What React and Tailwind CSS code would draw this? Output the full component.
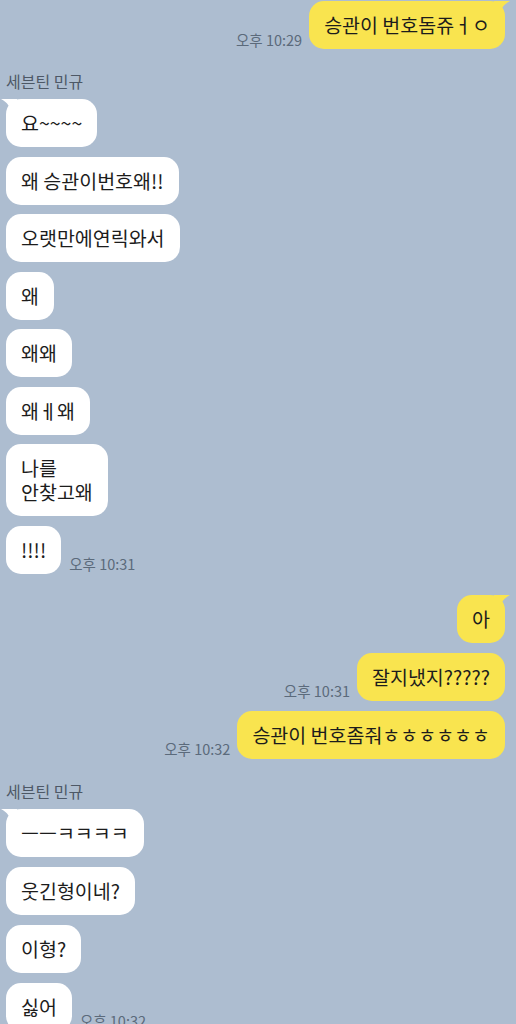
const font = { fontFamily: '"Noto Sans CJK KR", "Noto Sans", sans-serif' };

const LeftTail = () => (
  <svg
    className="absolute -left-[5px] top-0"
    width="16"
    height="16"
    viewBox="0 0 16 16"
  >
    <path d="M0 0 L16 0 L16 16 L11 16 C10 8 6 3 0 0 Z" fill="#ffffff" />
  </svg>
);

const RightTail = () => (
  <svg
    className="absolute -right-[5px] top-0"
    width="16"
    height="16"
    viewBox="0 0 16 16"
  >
    <path d="M16 0 L0 0 L0 16 L5 16 C6 8 10 3 16 0 Z" fill="#f9e44f" />
  </svg>
);

const Time = ({ children }) => (
  <span className="text-[14.5px] leading-none text-[#5b6a7b] whitespace-nowrap mb-[2px]">
    {children}
  </span>
);

const Other = ({ text, tail, time }) => (
  <div className="flex items-end gap-[8px] pl-[6px]">
    <div className="relative bg-white rounded-[15px] px-[15px] py-[12px] text-[19.5px] leading-[24px] text-[#1c1c1c] whitespace-pre-line">
      {tail && <LeftTail />}
      <span className="relative">{text}</span>
    </div>
    {time && <Time>{time}</Time>}
  </div>
);

const Me = ({ text, tail, time }) => (
  <div className="flex items-end justify-end gap-[7px] pr-[11px]">
    {time && <Time>{time}</Time>}
    <div className="relative bg-[#f9e44f] rounded-[15px] px-[15px] py-[12px] text-[19.5px] leading-[24px] text-[#1c1c1c] whitespace-nowrap">
      {tail && <RightTail />}
      <span className="relative">{text}</span>
    </div>
  </div>
);

const Name = ({ children }) => (
  <p className="pl-[6px] text-[16px] leading-[20px] text-[#4d5866] mb-2">
    {children}
  </p>
);

export default function App() {
  return (
    <div
      className="w-full h-[1024px] overflow-hidden bg-[#adbdd0] flex flex-col pt-[1px]"
      style={font}
    >
      <Me text="승관이 번호돔쥬ㅓㅇ" tail time="오후 10:29" />

      <div className="mt-[22px]">
        <Name>세븐틴 민규</Name>
        <div className="flex flex-col gap-[9.5px]">
          <Other text="요~~~~" tail />
          <Other text="왜 승관이번호왜!!" />
          <Other text="오랫만에연릭와서" />
          <Other text="왜" />
          <Other text="왜왜" />
          <Other text="왜ㅔ왜" />
          <Other text={"나를\n안찾고왜"} />
          <Other text="!!!!" time="오후 10:31" />
        </div>
      </div>

      <div className="mt-[21px] flex flex-col gap-[10px]">
        <Me text="아" tail />
        <Me text="잘지냈지?????" time="오후 10:31" />
        <Me text="승관이 번호좀줘ㅎㅎㅎㅎㅎㅎ" time="오후 10:32" />
      </div>

      <div className="mt-[22px]">
        <Name>세븐틴 민규</Name>
        <div className="flex flex-col gap-[10px]">
          <Other text="ㅡㅡㅋㅋㅋㅋ" tail />
          <Other text="웃긴형이네?" />
          <Other text="이형?" />
          <Other text="싫어" time="오후 10:32" />
        </div>
      </div>
    </div>
  );
}
